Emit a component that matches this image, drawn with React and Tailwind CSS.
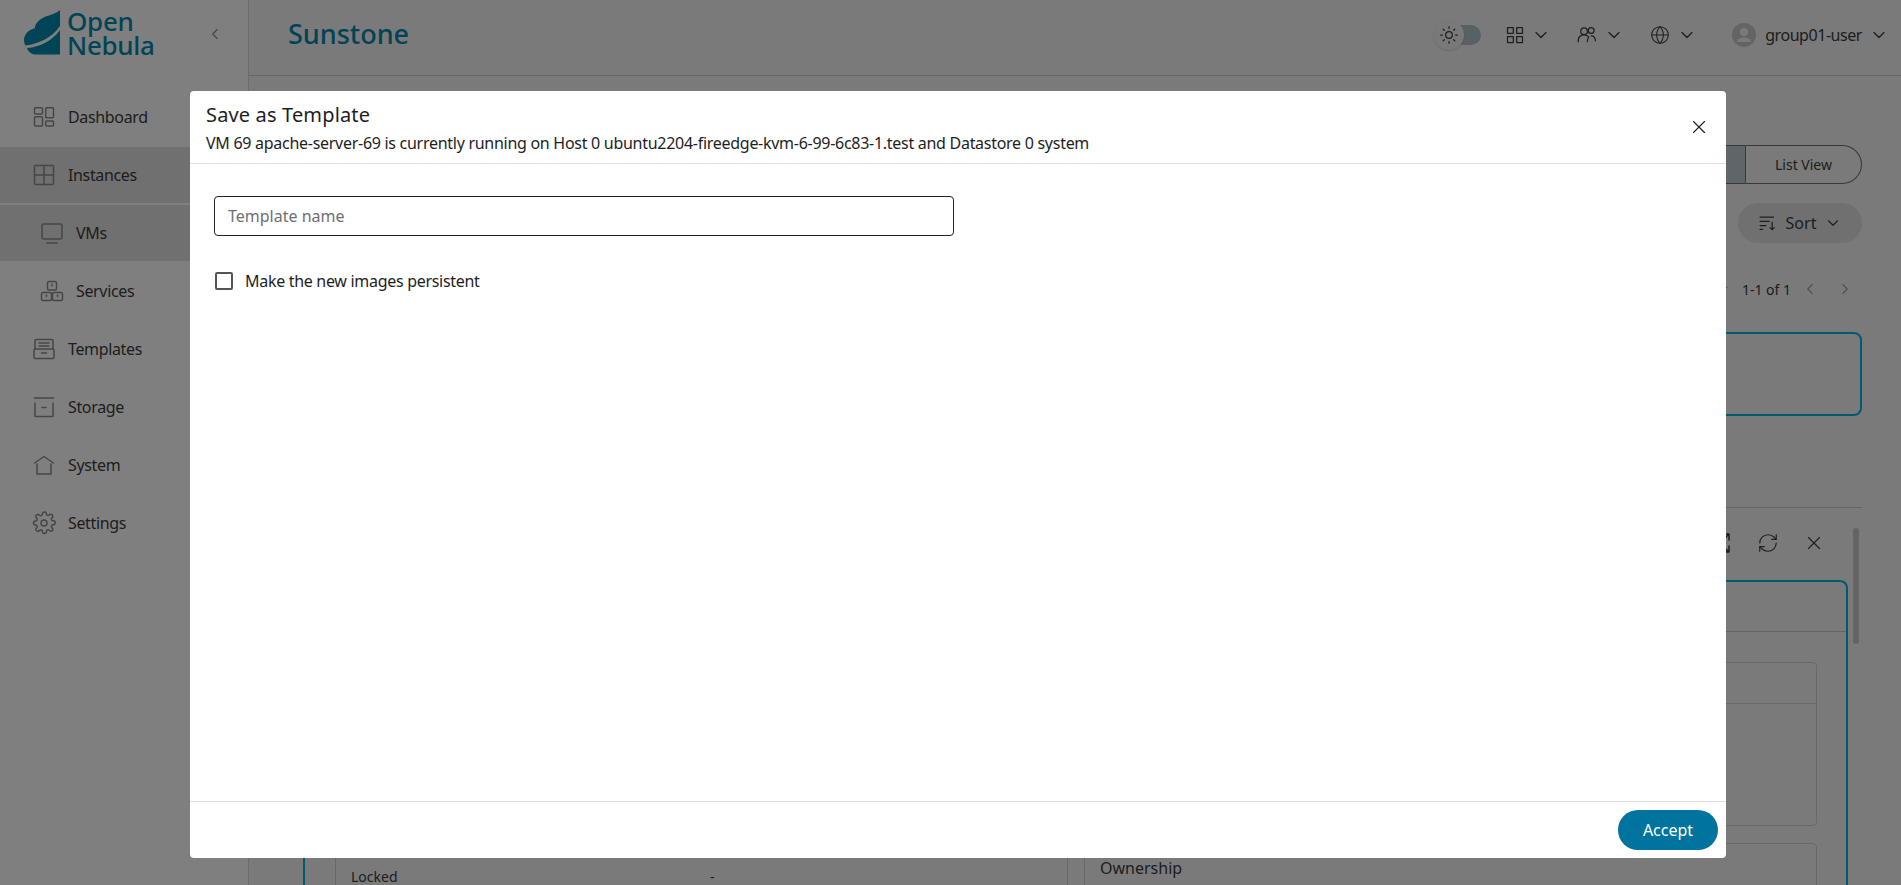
import { ChevronDown, ChevronLeft, ChevronRight, X, Sun, Globe, RefreshCw } from 'lucide-react';

const Svg = ({ children, size = 24, className = '' }) => (
  <svg width={size} height={size} viewBox="0 0 24 24" fill="none" stroke="currentColor" strokeWidth="1.5" strokeLinecap="round" strokeLinejoin="round" className={className}>
    {children}
  </svg>
);

const DashboardIcon = () => (
  <Svg>
    <rect x="2.500" y="2.700" width="8" height="6.300" rx="1" />
    <rect x="2.500" y="11.700" width="8" height="9.300" rx="1" />
    <rect x="13.700" y="2.700" width="7.800" height="10" rx="1" />
    <rect x="13.700" y="16" width="7.800" height="5" rx="1" />
  </Svg>
);

const InstancesIcon = () => (
  <Svg>
    <rect x="2.500" y="2.500" width="19" height="19" rx="1" />
    <path d="M12 2.500v19M2.500 12h19" />
  </Svg>
);

const VmsIcon = () => (
  <Svg>
    <rect x="2" y="3" width="20" height="15" rx="1.500" />
    <path d="M7 22h10" />
  </Svg>
);

const ServicesIcon = () => (
  <Svg>
    <rect x="7.500" y="2.500" width="9" height="8.500" rx="1.500" />
    <rect x="1.500" y="13.500" width="10" height="8" rx="1.500" />
    <rect x="12.500" y="13.500" width="10" height="8" rx="1.500" />
    <path d="M12 5v2M6.500 16v1.500M17.500 16v1.500" />
  </Svg>
);

const TemplatesIcon = () => (
  <Svg>
    <path d="M3 12V3.500a1 1 0 0 1 1-1h16a1 1 0 0 1 1 1V12" />
    <rect x="2" y="12" width="20" height="9.500" rx="1" />
    <path d="M7 6h10M7 9h10M9.500 16h5" />
  </Svg>
);

const StorageIcon = () => (
  <Svg>
    <path d="M2.500 3h19M3 8v13.500h18V8" />
    <path d="M10 12.500h4" />
  </Svg>
);

const SystemIcon = () => (
  <Svg>
    <path d="M2.500 10 12 3.500 21.500 10" />
    <path d="M5 11v10h14V11" />
  </Svg>
);

const SettingsIcon = () => (
  <Svg>
    <circle cx="12" cy="12" r="3" />
    <path d="M19.600 14.700a1.600 1.600 0 0 0 .3 1.800l.1.100a2 2 0 1 1-2.800 2.800l-.1-.1a1.600 1.600 0 0 0-2.700 1.100v.2a2 2 0 1 1-4 0v-.1a1.600 1.600 0 0 0-2.800-1.100l-.1.100a2 2 0 1 1-2.800-2.800l.1-.1a1.600 1.600 0 0 0-1.100-2.700h-.2a2 2 0 1 1 0-4h.1a1.600 1.600 0 0 0 1.100-2.800l-.1-.1a2 2 0 1 1 2.800-2.800l.1.100a1.600 1.600 0 0 0 1.800.3h.1a1.600 1.600 0 0 0 1-1.500v-.2a2 2 0 1 1 4 0v.1a1.600 1.600 0 0 0 2.700 1.100l.1-.1a2 2 0 1 1 2.800 2.800l-.1.100a1.600 1.600 0 0 0 1.100 2.800h.2a2 2 0 1 1 0 4h-.1a1.600 1.600 0 0 0-1.500 1z" />
  </Svg>
);

const AppsIcon = () => (
  <Svg size={20}>
    <rect x="3" y="3" width="7" height="7" />
    <rect x="14" y="3" width="7" height="7" />
    <rect x="3" y="14" width="7" height="7" />
    <rect x="14" y="14" width="7" height="7" />
  </Svg>
);

const GroupIcon = () => (
  <Svg size={20}>
    <path d="M1.500 20v-1a7 7 0 0 1 12.500-4.500M12.500 20c0-2 .5-3.500 1.500-5.500" />
    <circle cx="8.500" cy="7.500" r="4" />
    <circle cx="17" cy="6.500" r="3.500" />
    <path d="M17 13c3 0 5 2.500 5 6" />
  </Svg>
);

const SortIcon = () => (
  <Svg size={20}>
    <path d="M2.500 5h16M2.500 10h11M2.500 15h7M2.500 19.500h3" />
    <path d="M17 11v9M14.500 17.500 17 20l2.500-2.500" />
  </Svg>
);

const ExpandIcon = () => (
  <Svg>
    <path d="M15 3h6v6M21 3l-6 6M15 21h6v-6M21 21l-6-6M9 3H3v6M3 3l6 6M9 21H3v-6M3 21l6-6" />
  </Svg>
);

const Logo = () => (
  <div className="flex h-[89px] items-start pl-[24px] pt-[10px]">
    <svg width="36" height="45" viewBox="24 10 36 45" className="text-[#008aae]">
      <path fill="currentColor" d="M60 10C54 15 47 15 41 19C36 22 35 26 35 28C28 30 24 35 24 40C24 42 24.500 44 25.500 45.500C38 44 52 38 60 26Z" />
      <path fill="currentColor" d="M60 30C52 41 40 47 27 48C28 51 30 53.500 34 54.500L60 54.500Z" />
    </svg>
    <div className="ml-[7px] -mt-[1px] text-[26px] leading-[24px] font-medium text-[#008aae] tracking-[-0.3px]">
      <div>Open</div>
      <div>Nebula</div>
    </div>
    <ChevronLeft size={18} strokeWidth={1.5} className="ml-[51px] mt-[15px] text-[#888888]" />
  </div>
);

const NavItem = ({ icon, label, active, sub }) => (
  <div className={`flex h-[56px] items-center gap-[12px] ${sub ? 'pl-[40px]' : 'pl-[32px]'} ${active ? 'bg-[#e0e0e0]' : ''}`}>
    <span className="text-[#8c8c8c]">{icon}</span>
    <span>{label}</span>
  </div>
);

const Sidebar = () => (
  <aside className="flex w-[249px] shrink-0 flex-col border-r border-[#d8d8d8] bg-white text-[16px] tracking-[-0.35px] text-[#3c3c3c]">
    <Logo />
    <nav className="flex flex-col gap-[2px]">
      <NavItem icon={<DashboardIcon />} label="Dashboard" />
      <NavItem icon={<InstancesIcon />} label="Instances" active />
      <NavItem icon={<VmsIcon />} label="VMs" active sub />
      <NavItem icon={<ServicesIcon />} label="Services" sub />
      <NavItem icon={<TemplatesIcon />} label="Templates" />
      <NavItem icon={<StorageIcon />} label="Storage" />
      <NavItem icon={<SystemIcon />} label="System" />
      <NavItem icon={<SettingsIcon />} label="Settings" />
    </nav>
  </aside>
);

const Down = ({ className = '' }) => <ChevronDown size={20} strokeWidth={1.5} className={className} />;

const Header = () => (
  <header className="flex h-[76px] shrink-0 items-center border-b border-[#cfcfcf] pb-[6px] pl-[39px] pr-[12px] text-[#3c3c3c]">
    <h1 className="text-[27px] font-medium text-[#0088ad]">Sunstone</h1>
    <div className="ml-auto flex items-center">
      <div className="relative h-[20px] w-[32px] rounded-full bg-[#b4c3c9]">
        <span className="absolute -left-[15px] -top-[5px] flex h-[30px] w-[30px] items-center justify-center rounded-full bg-[#f2f2f2] shadow">
          <Sun size={20} strokeWidth={1.5} />
        </span>
      </div>
      <span className="ml-[24px]"><AppsIcon /></span>
      <Down className="ml-[6px]" />
      <span className="ml-[26px]"><GroupIcon /></span>
      <Down className="ml-[7px]" />
      <Globe size={20} strokeWidth={1.25} className="ml-[26px]" />
      <Down className="ml-[7px]" />
      <span className="ml-[35px] flex h-[24px] w-[24px] items-center justify-center overflow-hidden rounded-full bg-[#c8c8c8]">
        <svg width="24" height="24" viewBox="0 0 24 24" fill="#f5f5f5">
          <circle cx="12" cy="9" r="4" />
          <path d="M5 19c0-3 3.500-4.500 7-4.500s7 1.500 7 4.500z" />
        </svg>
      </span>
      <span className="ml-[9px] text-[16px] tracking-[-0.45px]">group01-user</span>
      <Down className="ml-[7px]" />
    </div>
  </header>
);

const Content = () => (
  <div className="flex min-h-0 flex-1 flex-col pl-[40px] pr-[39px] text-[#3c3c3c]">
    <div className="mt-[69px] flex h-[39px] shrink-0 justify-end text-[14px]">
      <div className="flex w-[130px] items-center justify-center rounded-l-full border border-[#707070] bg-[#bccdd3]">Card View</div>
      <div className="flex w-[116px] items-center justify-center rounded-r-full border border-l-0 border-[#707070]">List View</div>
    </div>
    <div className="mt-[19px] flex shrink-0 justify-end">
      <div className="flex h-[40px] w-[124px] items-center justify-center gap-[8px] rounded-full bg-[#e0e0e0] text-[16px]">
        <SortIcon />
        <span>Sort</span>
        <ChevronDown size={18} strokeWidth={1.5} />
      </div>
    </div>
    <div className="mt-[34px] flex h-[24px] shrink-0 items-center justify-end text-[14px]">
      <span className="mr-[15px] h-0 w-0 border-x-[4px] border-t-[5px] border-x-transparent border-t-[#3c3c3c]" />
      <span>1-1 of 1</span>
      <ChevronLeft size={18} strokeWidth={1.5} className="ml-[10px] text-[#a0a0a0]" />
      <ChevronRight size={18} strokeWidth={1.5} className="ml-[17px] mr-[8px] text-[#a0a0a0]" />
    </div>
    <div className="mt-[31px] h-[84px] shrink-0 rounded-lg border-2 border-[#00b4e8]" />
    <div className="mt-[91px] shrink-0 border-t border-[#c8c8c8]" />
    <div className="mt-[22px] flex h-[26px] shrink-0 items-center justify-end pr-[37px]">
      <ExpandIcon />
      <RefreshCw size={22} strokeWidth={1.25} className="ml-[25px]" />
      <X size={22} strokeWidth={1.25} className="ml-[24px]" />
    </div>
    <div className="mx-[14px] mt-[24px] flex-1 shrink-0 rounded-t-lg border-2 border-b-0 border-[#00b4e8]">
      <div className="h-[50px] border-b border-[#c8c8c8]" />
      <div className="mt-[30px] grid grid-cols-2 gap-[16px] pl-[30px] pr-[29px]">
        <div className="rounded border border-[#d0d0d0] pl-[15px]">
          <div className="h-[203px]" />
          <div className="flex text-[14px]">
            <span className="w-[359px]">Locked</span>
            <span>-</span>
          </div>
        </div>
        <div>
          <div className="h-[164px] rounded border border-[#d0d0d0]">
            <div className="h-[41px] border-b border-[#d0d0d0]" />
          </div>
          <div className="mt-[17px] rounded border border-[#d0d0d0] px-[15px] py-[12px] text-[16px]">Ownership</div>
        </div>
      </div>
    </div>
  </div>
);

const SaveTemplateDialog = () => (
  <div className="absolute inset-0 bg-black/50 pl-[190px] pt-[91px]">
    <div className="flex h-[767px] w-[1536px] flex-col rounded bg-white text-[#1e1e1e]">
      <div className="flex h-[73px] shrink-0 items-start justify-between border-b border-[#e0e0e0] pl-[16px] pr-[16px] pt-[10px]">
        <div>
          <h2 className="text-[20px] leading-[28px] tracking-[0.15px]">Save as Template</h2>
          <p className="mt-[2px] text-[16px] leading-[24px] tracking-[-0.28px]">VM 69 apache-server-69 is currently running on Host 0 ubuntu2204-fireedge-kvm-6-99-6c83-1.test and Datastore 0 system</p>
        </div>
        <X size={22} strokeWidth={1.25} className="mt-[15px]" />
      </div>
      <div className="flex-1 pl-[24px] pt-[32px]">
        <input
          placeholder="Template name"
          className="h-[40px] w-[740px] rounded border border-[#222222] px-[13px] text-[16px] outline-none placeholder:text-[#6f6f6f]"
        />
        <label className="mt-[33px] flex items-center gap-[12px] text-[16px] tracking-[-0.3px]">
          <span className="ml-[1px] h-[18px] w-[18px] rounded-[2px] border-2 border-[#555555]" />
          Make the new images persistent
        </label>
      </div>
      <div className="flex h-[57px] shrink-0 items-start justify-end border-t border-[#e0e0e0] pr-[8px] pt-[8px]">
        <button className="h-[40px] w-[100px] rounded-full bg-[#00739e] text-[16px] text-white">Accept</button>
      </div>
    </div>
  </div>
);

const App = () => (
  <div className="relative flex h-screen overflow-hidden bg-[#f5f5f5] font-['Noto_Sans',sans-serif]">
    <Sidebar />
    <main className="flex min-w-0 flex-1 flex-col">
      <Header />
      <Content />
    </main>
    <div className="absolute right-[42px] top-[528px] h-[116px] w-[6px] rounded-full bg-[#c8c8c8]" />
    <SaveTemplateDialog />
  </div>
);

export default App;
